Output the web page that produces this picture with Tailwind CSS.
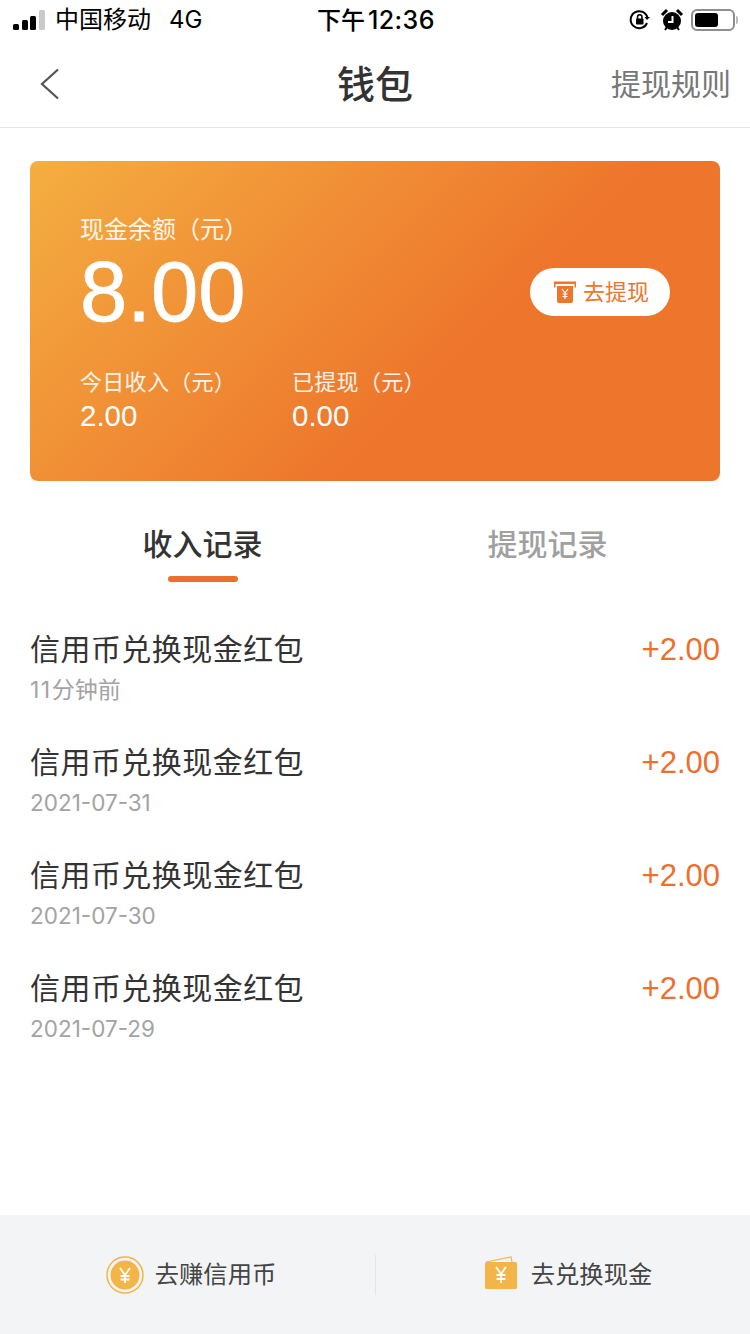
<!DOCTYPE html>
<html lang="zh-CN">
<head>
<meta charset="utf-8">
<script src="https://cdn.jsdelivr.net/npm/@tailwindcss/browser@4"></script>
</head>
<body class="m-0 bg-white">
<div class="w-[750px] h-[1334px] flex flex-col bg-white overflow-hidden font-['Inter','Noto_Sans_CJK_SC',sans-serif] text-[#333]">
  <!-- status bar -->
  <div class="h-[40px] shrink-0 flex items-center justify-between pl-[13px] pr-[12px] text-black relative">
    <div class="flex items-center">
      <svg width="33" height="22" viewBox="0 0 33 22" class="fill-black"><rect x="0" y="15" width="6" height="6" rx="1.5"/><rect x="9" y="11" width="6" height="10" rx="1.5"/><rect x="17" y="7" width="6" height="14" rx="1.5"/><rect x="26" y="1" width="6" height="20" rx="1.5" fill="#c9c9c9"/></svg>
      <span class="ml-[9px] text-[24px] leading-[42px]">中国移动</span>
      <span class="ml-[18px] text-[24px] leading-[42px]">4G</span>
    </div>
    <div class="absolute left-[317px] top-0 text-[24px] leading-[41px] font-medium whitespace-nowrap">下午<span class="ml-[3px] text-[25px] tracking-[0.4px]">12:36</span></div>
    <div class="flex items-center">
      <svg width="22" height="22" viewBox="0 0 22 22" fill="none" stroke="#000" stroke-width="2"><path d="M18 14a8.5 8.5 0 1 1 .5-5"/><path d="M21 8l-3 3-2.500-3z" fill="#000" stroke="none"/><rect x="7" y="9.500" width="7.500" height="6" rx="1" fill="#000" stroke="none"/><path d="M8.500 10V8a2.200 2.200 0 0 1 4.500 0v2" stroke-width="1.500"/></svg>
      <svg width="24" height="24" viewBox="0 0 24 24" class="ml-[9px]"><circle cx="12" cy="13" r="9" fill="#000"/><path d="M2 7l5-5M22 7l-5-5" stroke="#000" stroke-width="3"/><path d="M5 22l2-3M19 22l-2-3" stroke="#000" stroke-width="2"/><path d="M12.500 8v6H8" stroke="#fff" stroke-width="2" fill="none"/></svg>
      <div class="ml-[7px] w-[44px] h-[22px] rounded-[6px] border-2 border-[#8e8e8e] p-[2px] flex"><div class="w-[23px] h-full bg-black rounded-[3px]"></div></div>
      <div class="ml-[1px] w-[2px] h-[8px] bg-[#bbb] rounded-r"></div>
    </div>
  </div>
  <!-- nav -->
  <div class="h-[88px] shrink-0 border-b border-[#e5e5e5] flex items-center justify-between pl-[40px] pr-[19px] relative">
    <svg width="20" height="32" viewBox="0 0 20 32" fill="none" stroke="#555" stroke-width="2.200"><path d="M18 1.500 2 16l16 14.500"/></svg>
    <div class="absolute left-0 right-0 text-center text-[38px] leading-[50px] font-medium text-[#333] pointer-events-none">钱包</div>
    <div class="text-[30px] leading-[40px] text-[#777]">提现规则</div>
  </div>
  <!-- card -->
  <div class="mt-[33px] mx-[30px] h-[320px] shrink-0 rounded-[8px] bg-[linear-gradient(135deg,#f4ae41_0%,#ed752c_62%,#ed752c_100%)] pl-[50px] pr-[50px] pt-[52px] flex flex-col text-white relative">
    <div class="text-[24px] leading-[34px] text-white/90 whitespace-nowrap">现金余额（元）</div>
    <div class="flex items-center justify-between mt-[1px]">
      <div class="text-[85px] leading-[88px] [-webkit-text-stroke:0.8px_white] font-['Liberation_Sans','Noto_Sans_CJK_SC',sans-serif]">8.00</div>
      <div class="w-[140px] h-[48px] rounded-full bg-white flex items-center justify-center pl-[3px] text-[#ed752c] text-[22px] -mt-[0px]">
        <svg width="22" height="22" viewBox="0 0 22 22" class="mr-[7px]"><path d="M0 0.500h22v6h-1.500v-3.500h-19v3.500h-1.500z" fill="#ed752c"/><path d="M3 5h16v15a2 2 0 0 1-2 2H5a2 2 0 0 1-2-2z" fill="#ed752c"/><path d="M8 8l3 4 3-4M11 12v6M8.500 13h5M8.500 15.500h5" stroke="#fff" stroke-width="1.200" fill="none"/></svg>
        <span>去提现</span>
      </div>
    </div>
    <div class="flex mt-[31px]">
      <div class="w-[212px]">
        <div class="text-[22px] leading-[30px] tracking-[0.3px] text-white/90 whitespace-nowrap">今日收入（元）</div>
        <div class="text-[29.5px] leading-[36px] mt-[1px] font-['Liberation_Sans','Noto_Sans_CJK_SC',sans-serif]">2.00</div>
      </div>
      <div>
        <div class="text-[22px] leading-[30px] tracking-[0.3px] text-white/90 whitespace-nowrap">已提现（元）</div>
        <div class="text-[29.5px] leading-[36px] mt-[1px] font-['Liberation_Sans','Noto_Sans_CJK_SC',sans-serif]">0.00</div>
      </div>
    </div>
  </div>
  <!-- tabs -->
  <div class="mt-[39px] h-[62px] shrink-0 flex text-[30px] leading-[48px] font-medium">
    <div class="w-[405px] flex flex-col items-center relative">
      <span class="text-[#333]">收入记录</span>
      <div class="mt-[8px] w-[70px] h-[6px] rounded-full bg-[#ee6f2d]"></div>
    </div>
    <div class="w-[285px] text-center text-[#a0a0a0]">提现记录</div>
  </div>
  <!-- list -->
  <div class="mt-[45px] px-[30px] flex flex-col">
    <div class="h-[113px] flex justify-between">
      <div>
        <div class="text-[30px] leading-[44px] tracking-[0.45px] text-[#333]">信用币兑换现金红包</div>
        <div class="text-[23px] leading-[30px] text-[#a3a3a3] mt-[4px]"><span class="tracking-[1.5px]">11</span>分钟前</div>
      </div>
      <div class="text-[31px] leading-[44px] pt-[1px] text-[#ee6f2d] font-['Liberation_Sans','Noto_Sans_CJK_SC',sans-serif]">+2.00</div>
    </div>
    <div class="h-[113px] flex justify-between">
      <div>
        <div class="text-[30px] leading-[44px] tracking-[0.45px] text-[#333]">信用币兑换现金红包</div>
        <div class="text-[22.5px] leading-[30px] text-[#a3a3a3] mt-[4px]">2021-07-31</div>
      </div>
      <div class="text-[31px] leading-[44px] pt-[1px] text-[#ee6f2d] font-['Liberation_Sans','Noto_Sans_CJK_SC',sans-serif]">+2.00</div>
    </div>
    <div class="h-[113px] flex justify-between">
      <div>
        <div class="text-[30px] leading-[44px] tracking-[0.45px] text-[#333]">信用币兑换现金红包</div>
        <div class="text-[22.5px] leading-[30px] text-[#a3a3a3] mt-[4px]">2021-07-30</div>
      </div>
      <div class="text-[31px] leading-[44px] pt-[1px] text-[#ee6f2d] font-['Liberation_Sans','Noto_Sans_CJK_SC',sans-serif]">+2.00</div>
    </div>
    <div class="h-[113px] flex justify-between">
      <div>
        <div class="text-[30px] leading-[44px] tracking-[0.45px] text-[#333]">信用币兑换现金红包</div>
        <div class="text-[22.5px] leading-[30px] text-[#a3a3a3] mt-[4px]">2021-07-29</div>
      </div>
      <div class="text-[31px] leading-[44px] pt-[1px] text-[#ee6f2d] font-['Liberation_Sans','Noto_Sans_CJK_SC',sans-serif]">+2.00</div>
    </div>
  </div>
  <!-- bottom bar -->
  <div class="mt-auto h-[119px] shrink-0 bg-[#f3f4f6] flex items-center text-[24.3px] text-[#444]">
    <div class="w-[375px] flex items-center justify-center pl-[7px]">
      <svg width="38" height="38" viewBox="0 0 38 38"><circle cx="19" cy="19" r="18" fill="none" stroke="#f4b548" stroke-width="1.500"/><circle cx="19" cy="19" r="14.500" fill="#f4b548"/><path d="M14 12l5 7 5-7M19 19v8M14.500 20h9M14.500 23.500h9" stroke="#fff" stroke-width="1.800" fill="none"/></svg>
      <span class="ml-[11px]">去赚信用币</span>
    </div>
    <div class="w-px h-[40px] bg-[#e3e4e6]"></div>
    <div class="w-[374px] flex items-center justify-center pl-[11px]">
      <svg width="32" height="34" viewBox="0 0 32 34" class="-mt-[4px]"><path d="M1 6 26 1l1 5" fill="none" stroke="#f4b548" stroke-width="1.200"/><rect x="0" y="6" width="32" height="27" rx="1.500" fill="#f4b548"/><path d="M11 11l5 7 5-7M16 18v9M11.500 19h9M11.500 23h9" stroke="#fff" stroke-width="1.800" fill="none"/></svg>
      <span class="ml-[14px]">去兑换现金</span>
    </div>
  </div>
</div>
</body>
</html>
